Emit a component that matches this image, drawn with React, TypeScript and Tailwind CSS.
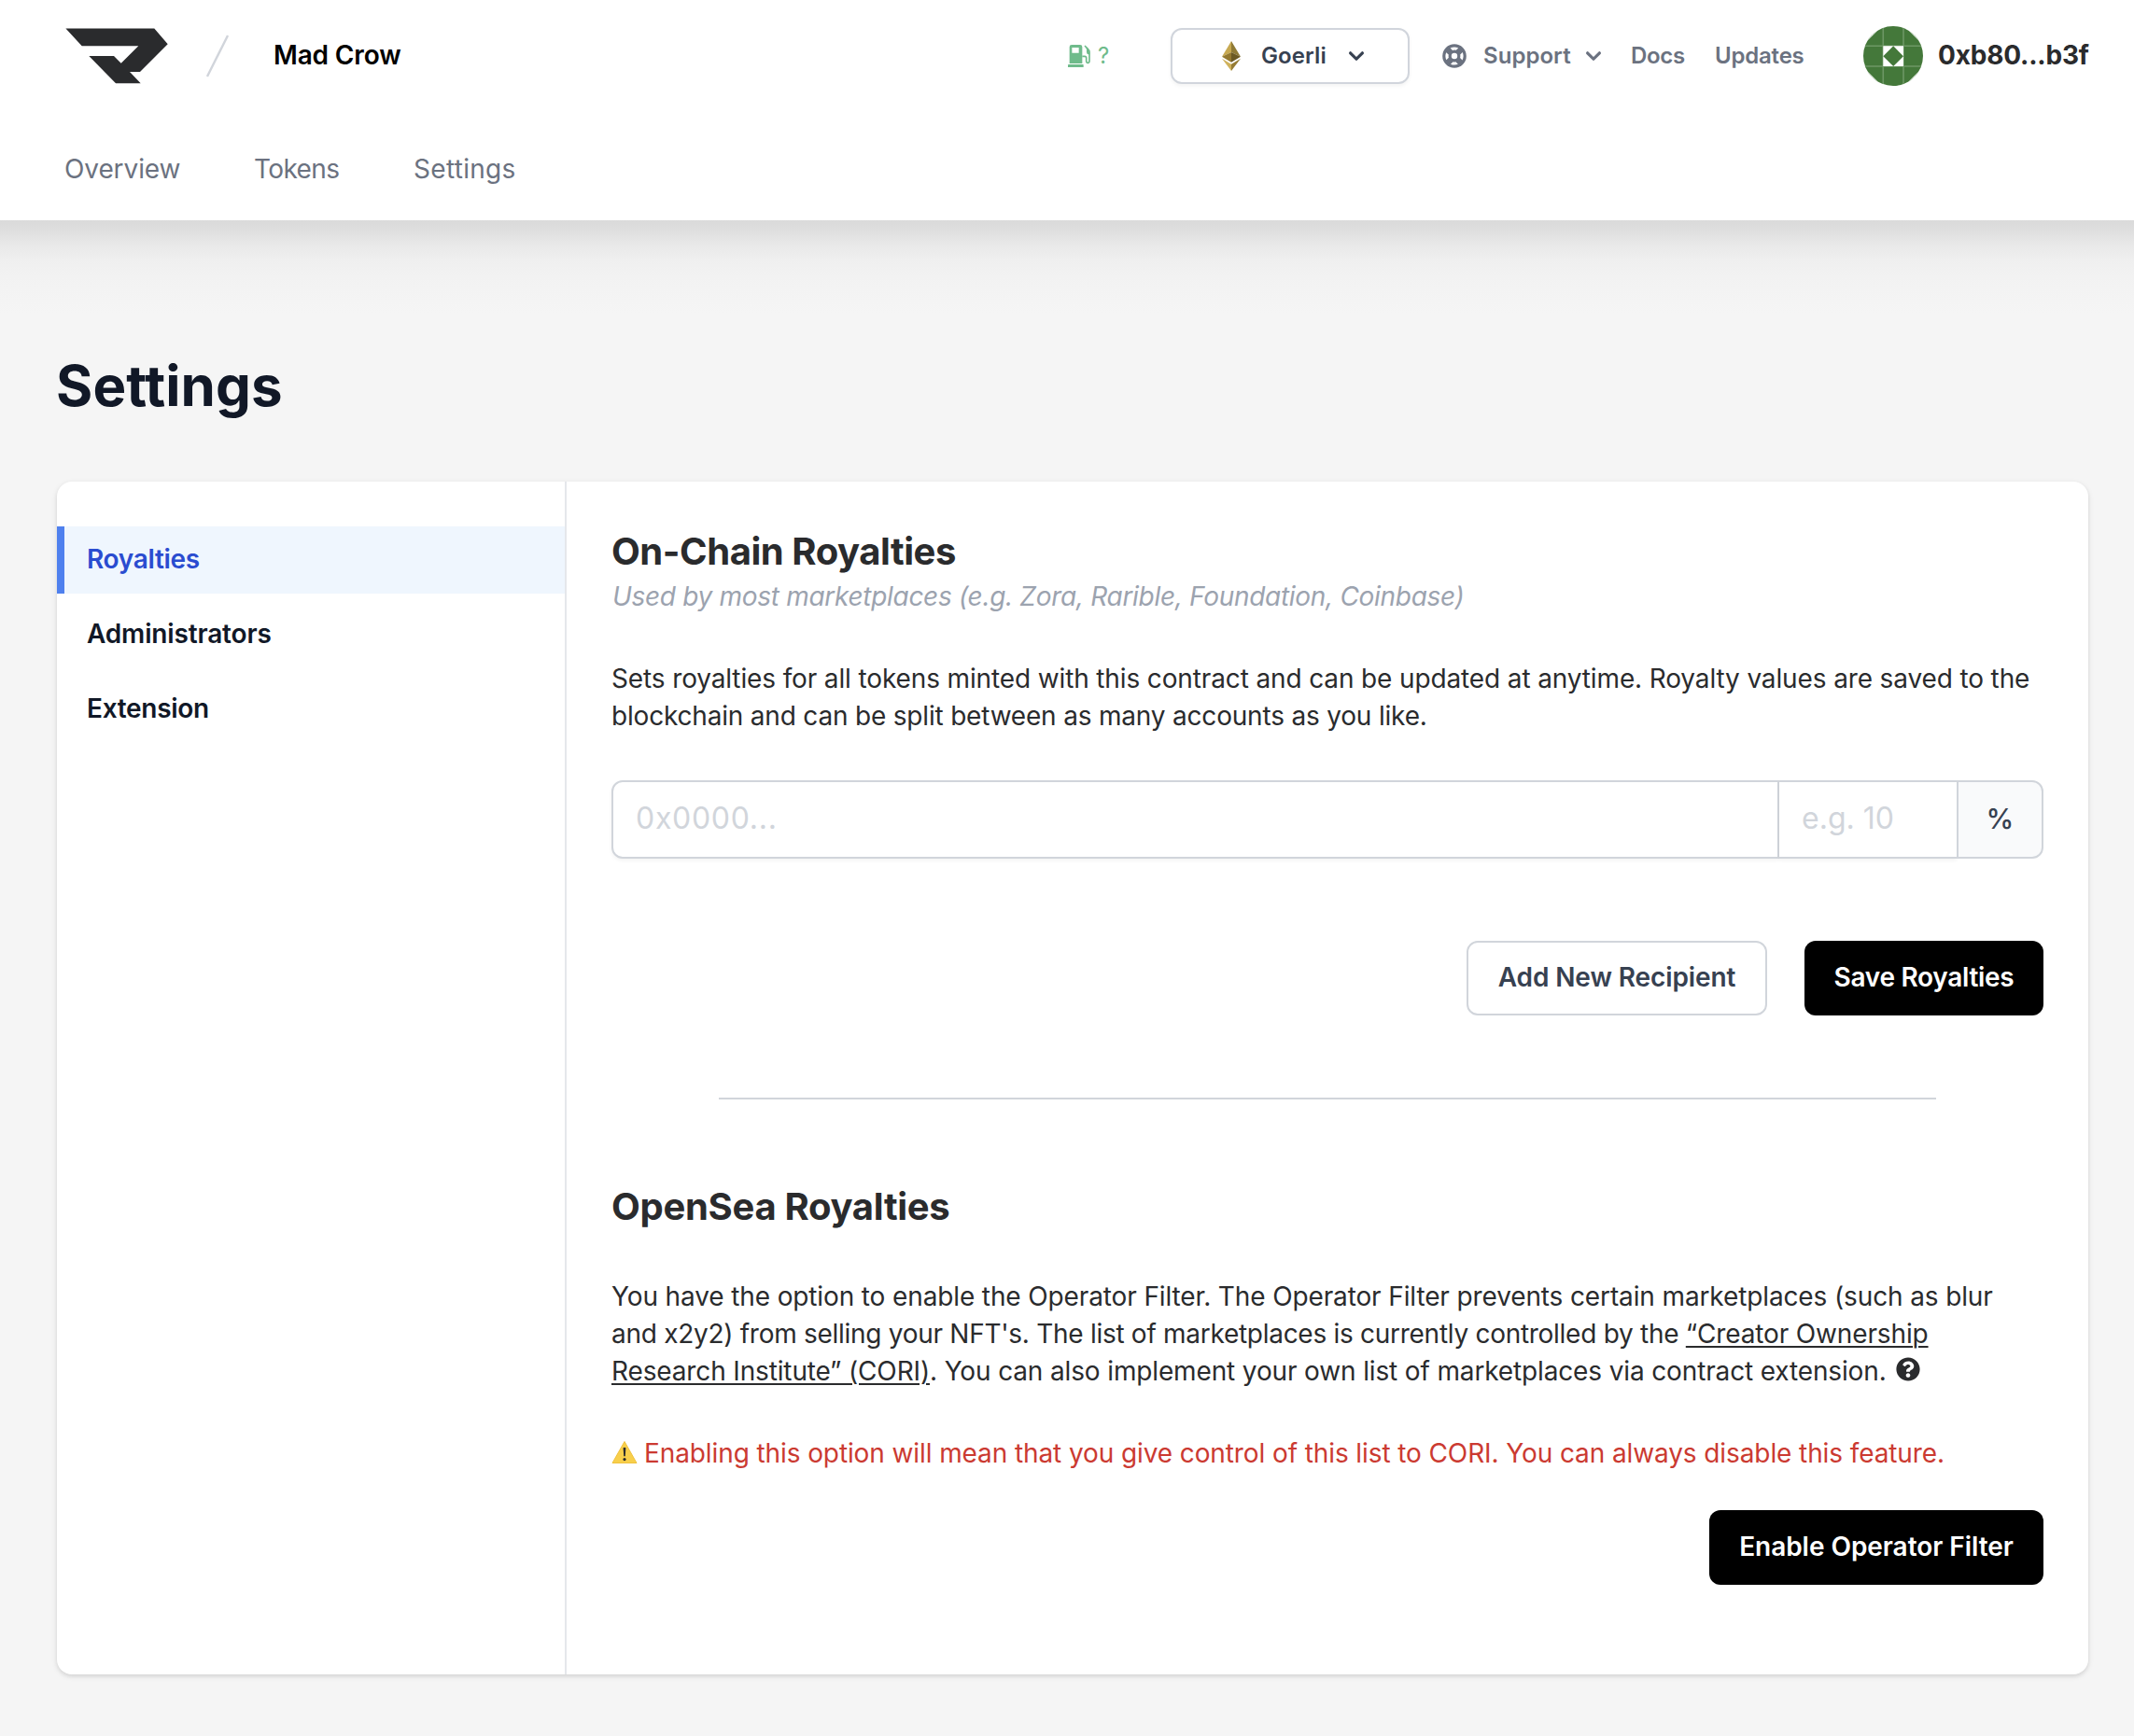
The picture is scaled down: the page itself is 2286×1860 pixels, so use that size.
import type { ReactNode } from "react";
import { HiChevronDown, HiSupport } from "react-icons/hi";
import { FaQuestionCircle } from "react-icons/fa";

function Logo() {
  return (
    <svg className="h-[60px] w-[110px]" viewBox="0 0 110 60" fill="#2a2b2d">
      <path d="M.4 .6H95.3L109.7 17.3 80 47H69L80.7 59.3H54L25.3 30H52L59.7 37.7 78.3 19.3H17.7Z" />
    </svg>
  );
}

function GasIcon() {
  return (
    <svg className="h-6 w-6" viewBox="0 0 72 72" fill="none">
      <path
        fill="#6fbb8b"
        fillRule="evenodd"
        d="M12 0h27a7 7 0 0 1 7 7v53H5V7a7 7 0 0 1 7-7ZM13 9v17h22V9Z"
      />
      <path fill="#6fbb8b" d="M2 63h46a2 2 0 0 1 2 2v7H0v-7a2 2 0 0 1 2-2Z" />
      <path
        stroke="#6fbb8b"
        strokeWidth="5"
        d="M54 3l10 10q5 5 5 12v27q0 6-5 6t-5-6V42q0-5-5-5h-8"
      />
      <path fill="#6fbb8b" d="M56 5l14 13v13h-5q-5-2-5-8v-8Z" />
    </svg>
  );
}

function EthIcon() {
  return (
    <svg className="h-8 w-5" viewBox="0 0 60 96">
      <path fill="#c7a951" d="M30 0 0 50 30 36Z" />
      <path fill="#8f7a35" d="M30 0 60 50 30 36Z" />
      <path fill="#94792f" d="M0 50 30 36V68Z" />
      <path fill="#6b5923" d="M60 50 30 36V68Z" />
      <path fill="#d0b25c" d="M0 56 30 74V96Z" />
      <path fill="#967c33" d="M60 56 30 74V96Z" />
    </svg>
  );
}

function Avatar() {
  return (
    <svg className="size-16 rounded-full" viewBox="0 0 64 64">
      <rect width="64" height="64" fill="#44783a" />
      <path stroke="#6d9765" strokeWidth="1.6" d="M21.3 0v64M43 0v64M0 21.3h64M0 43h64" />
      <path
        fill="#fff"
        d="M21.3 21.3H43V43H21.3ZM0 0h20L0 20ZM64 0v20L44 0ZM0 64V44L20 64ZM64 64H44L64 44Z"
      />
      <path fill="#44783a" d="M32.2 21.3 43 32.2 32.2 43 21.3 32.2Z" />
    </svg>
  );
}

function WarningIcon() {
  return (
    <svg className="-mt-0.5 h-[26px] w-7" viewBox="0 0 28 26">
      <path fill="#f8cf4b" stroke="#f0c23e" strokeLinejoin="round" d="M14 1.5 27 24.5H1Z" />
      <path fill="#2a2b2d" d="M12.6 8.2q1.4-1 2.8 0l-.6 9h-1.6Z" />
      <circle cx="14" cy="20.6" r="1.6" fill="#2a2b2d" />
    </svg>
  );
}

function Line({ className, children }: { className: string; children: ReactNode }) {
  return <span className={`block whitespace-nowrap ${className}`}>{children}</span>;
}

function Header() {
  return (
    <header className="h-[236px] bg-white">
      <div className="flex h-[120px] items-center pl-[70px]">
        <Logo />
        <svg className="ml-[41px] h-[46px] w-6" viewBox="0 0 24 46">
          <path d="M23 1 1 45" stroke="#d1d5db" strokeWidth="2.4" />
        </svg>
        <span className="ml-12 pb-0.5 text-[28px] font-semibold tracking-[-0.15px] text-black">Mad Crow</span>

        <div className="mr-[48px] ml-auto flex w-[1094px] items-center whitespace-nowrap *:shrink-0">
          <div className="flex w-[110px] items-center gap-2 text-2xl text-[#6fbb8b]">
            <GasIcon />
            <span>?</span>
          </div>
          <button className="flex h-[60px] w-64 items-center rounded-xl border-2 border-gray-300 bg-white pl-[53px] shadow-[0_2px_4px_rgba(0,0,0,0.05)]">
            <EthIcon />
            <span className="ml-[22px] w-[86px] text-left text-2xl font-[580] tracking-[0.1px] text-[#374151]">
              Goerli
            </span>
            <HiChevronDown className="size-8 text-[#374151]" />
          </button>
          <div className="ml-8 flex items-center text-[#6b7280]">
            <HiSupport className="size-8" />
            <span className="ml-[15px] w-[102px] text-2xl font-[580] tracking-[0.05px]">Support</span>
            <HiChevronDown className="size-8" />
          </div>
          <span className="ml-6 w-[90px] text-2xl font-[580] tracking-[-0.3px] text-[#6b7280]">Docs</span>
          <span className="w-[159px] text-2xl font-[580] tracking-[-0.2px] text-[#6b7280]">Updates</span>
          <Avatar />
          <span className="ml-4 pb-0.5 text-[28px] font-[650] tracking-[-0.2px] text-[#2a2b2d]">0xb80...b3f</span>
        </div>
      </div>
      <nav className="flex h-[116px] items-center pt-1.5 pl-[69px] text-[28px] text-[#6b7280]">
        <a className="w-[203px] tracking-[-0.1px]">Overview</a>
        <a className="w-[171px] tracking-[-0.6px]">Tokens</a>
        <a className="tracking-[0.3px]">Settings</a>
      </nav>
    </header>
  );
}

function Sidebar() {
  return (
    <aside className="flex w-[546px] shrink-0 flex-col gap-2 border-r-2 border-[#e5e7eb] pt-12 text-[28px] font-[580] tracking-[-0.15px] text-[#111827]">
      <a className="flex h-[72px] items-center border-l-8 border-[#4f80ee] bg-[#eff6fe] pb-[3px] pl-6 tracking-[-0.3px] text-[#2a4cd0]">
        Royalties
      </a>
      <a className="flex h-[72px] items-center pb-[3px] pl-8">Administrators</a>
      <a className="flex h-[72px] items-center pb-[3px] pl-8 tracking-[-0.3px]">Extension</a>
    </aside>
  );
}

function RoyaltyInput() {
  return (
    <div className="mt-[49px] flex h-[84px] text-[32px] text-[#d1d5db]">
      <div className="flex w-[1251px] items-center rounded-l-xl border-2 border-[#d1d5db] bg-white pb-[3px] pl-6 tracking-[0.7px] shadow-[0_2px_4px_rgba(0,0,0,0.05)]">
        0x0000...
      </div>
      <div className="flex w-[190px] items-center border-y-2 border-[#d1d5db] bg-white pb-[3px] pl-6 shadow-[0_2px_4px_rgba(0,0,0,0.05)]">
        e.g. 10
      </div>
      <div className="flex grow items-center justify-center rounded-r-xl border-2 border-[#d1d5db] bg-[#f9fafb] pb-[3px] text-[30px] font-medium text-[#374151]">
        %
      </div>
    </div>
  );
}

function Content() {
  return (
    <section className="flex w-[1630px] flex-col px-12 pt-[47px] text-[28px] leading-10 text-[#2a2b2d]">
      <h2 className="text-[40px] leading-[56px] font-[650] tracking-[-0.45px]">On-Chain Royalties</h2>
      <p className="ml-px tracking-[-0.3px] whitespace-nowrap text-[#9ca3af] italic">
        Used by most marketplaces (e.g. Zora, Rarible, Foundation, Coinbase)
      </p>
      <p className="mt-12">
        <Line className="tracking-[-0.13px]">
          Sets royalties for all tokens minted with this contract and can be updated at anytime. Royalty values are saved to the
        </Line>
        <Line className="tracking-[-0.19px]">blockchain and can be split between as many accounts as you like.</Line>
      </p>
      <RoyaltyInput />
      <div className="mt-[88px] flex justify-end gap-10 font-[580]">
        <button className="h-20 w-[322px] rounded-xl border-2 border-[#d1d5db] bg-white pb-0.5 tracking-[-0.1px] text-[#374151]">
          Add New Recipient
        </button>
        <button className="h-20 w-64 rounded-xl bg-black pb-0.5 tracking-[-0.3px] text-white">Save Royalties</button>
      </div>
      <div className="mx-auto mt-22 h-0.5 w-[1304px] bg-[#d1d5db]" />
      <h2 className="mt-[87px] text-[40px] leading-[56px] font-[650] tracking-[-0.3px]">OpenSea Royalties</h2>
      <div className="mt-12">
        <Line className="tracking-[-0.125px]">
          You have the option to enable the Operator Filter. The Operator Filter prevents certain marketplaces (such as blur
        </Line>
        <Line className="tracking-[-0.28px]">
          and x2y2) from selling your NFT's. The list of marketplaces is currently controlled by the{" "}
          <a className="tracking-[-0.14px] underline decoration-2 underline-offset-[3px]">“Creator Ownership</a>
        </Line>
        <Line className="tracking-[-0.14px]">
          <a className="underline decoration-2 underline-offset-[3px]">Research Institute” (CORI)</a>. You can also implement
          your own list of marketplaces via contract extension.
          <FaQuestionCircle className="-mb-px ml-2.5 inline size-[26px] align-baseline" />
        </Line>
      </div>
      <p className="mt-12 flex h-10 items-center tracking-[-0.1px] whitespace-nowrap text-[#cb3a31]">
        <WarningIcon />
        <span className="ml-[7px]">
          Enabling this option will mean that you give control of this list to CORI. You can always disable this feature.
        </span>
      </p>
      <button className="mt-[41px] h-20 w-[358px] self-end rounded-xl bg-black pb-0.5 font-[580] tracking-[-0.05px] text-white">
        Enable Operator Filter
      </button>
    </section>
  );
}

export default function App() {
  return (
    <div className="min-h-[1860px] w-[2286px] overflow-hidden bg-[#f5f5f5] font-[Inter,sans-serif]">
      <Header />
      <main className="bg-[linear-gradient(to_bottom,#dadada_0px,#dddddd_8px,#e1e1e1_15px,#e8e8e8_25px,#efefef_42px,#f2f2f2_60px,#f5f5f5_100px)] pt-[141px]">
        <h1 className="ml-[60px] text-[60px] leading-[72px] font-bold tracking-[0.1px] text-[#111827]">Settings</h1>
        <div className="mt-[67px] ml-[61px] flex h-[1278px] w-[2176px] overflow-hidden rounded-2xl bg-white shadow-[0_2px_6px_rgba(0,0,0,0.1),0_2px_4px_rgba(0,0,0,0.06)]">
          <Sidebar />
          <Content />
        </div>
      </main>
    </div>
  );
}
